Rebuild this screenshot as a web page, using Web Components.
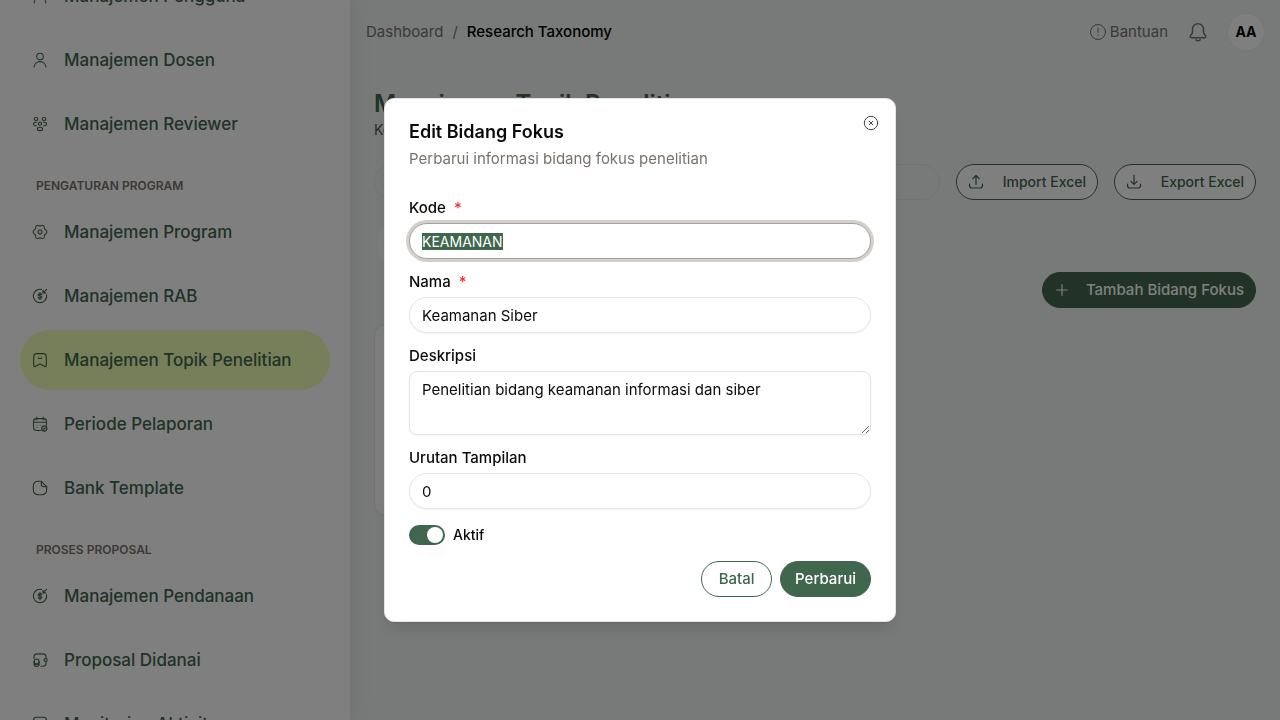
<!DOCTYPE html>
<html lang="id">
<head>
<meta charset="utf-8">
<meta name="viewport" content="width=device-width, initial-scale=1">
<title>Research Taxonomy</title>
<style>
  html, body { margin: 0; height: 100%; }
  body {
    --green: #40664d;
    --muted: #79716b;
    --line: #e5e5e5;
    --ink: #0c0a09;
    font: 400 15px/20px Inter, "Noto Sans", sans-serif;
    color: var(--ink);
    background: #f0f4f2;
  }
</style>
</head>
<body>
<app-shell>
  <side-nav slot="side">
    <nav-group>
      <nav-item icon="user">Manajemen Pengguna</nav-item>
      <nav-item icon="user">Manajemen Dosen</nav-item>
      <nav-item icon="team">Manajemen Reviewer</nav-item>
    </nav-group>
    <nav-group label="PENGATURAN PROGRAM">
      <nav-item icon="gear">Manajemen Program</nav-item>
      <nav-item icon="fund">Manajemen RAB</nav-item>
      <nav-item icon="bookmark" active>Manajemen Topik Penelitian</nav-item>
      <nav-item icon="calendar">Periode Pelaporan</nav-item>
      <nav-item icon="file">Bank Template</nav-item>
    </nav-group>
    <nav-group label="PROSES PROPOSAL">
      <nav-item icon="fund">Manajemen Pendanaan</nav-item>
      <nav-item icon="wallet">Proposal Didanai</nav-item>
      <nav-item icon="monitor">Monitoring Aktivitas</nav-item>
    </nav-group>
  </side-nav>
  <top-bar></top-bar>
  <topic-page></topic-page>
</app-shell>
<edit-dialog></edit-dialog>

<script>
const ICONS = {
  user: '<circle cx="8" cy="4.6" r="3.3"/><path d="M2.1 15c.2-3.2 2.8-5.4 5.9-5.4s5.7 2.2 5.9 5.4"/>',
  team: '<circle cx="4" cy="3" r="1.7"/><circle cx="12" cy="3" r="1.7"/><circle cx="8" cy="7.7" r="1.6"/><ellipse cx="8" cy="12.9" rx="2.6" ry="1.7"/><path d="M4.4 6.5H3a1.6 1.6 0 0 0 0 3.2h1.5M11.6 6.5H13a1.6 1.6 0 0 1 0 3.2h-1.5"/>',
  gear: '<path d="M8 2.300C9.300 1 11.200 1 12 2.200 12.600 3.200 12.100 4.400 12.700 5.200 13.300 5.900 14.900 6.200 14.900 8S13.300 10.100 12.700 10.800C12.100 11.600 12.600 12.800 12 13.800 11.200 15 9.300 15 8 13.700 6.700 15 4.800 15 4 13.800 3.400 12.800 3.900 11.600 3.300 10.800 2.700 10.100 1.100 9.800 1.100 8S2.700 5.900 3.300 5.200C3.900 4.400 3.400 3.200 4 2.200 4.800 1 6.700 1 8 2.300Z"/><path d="M6.900 6.100h2.200L10.200 8 9.100 9.900H6.900L5.800 8Z"/>',
  fund: '<path d="M9.500 1.400A6.700 6.700 0 1 0 14.600 6.700M14.600 1.300 11.200 4.700M11 2.200v2.700h2.700"/><path d="M9.800 6.600C9.400 5.900 8.800 5.700 8 5.700c-1 0-1.800.4-1.800 1.200C6.200 8.500 9.900 7.500 9.900 9.200c0 .8-.8 1.200-1.900 1.200-.9 0-1.600-.3-1.900-.9M8 4.700v6.700" stroke-width="1.2"/>',
  bookmark: '<path d="M1.700 5c0-2.400.9-3.400 3.300-3.400h6c2.400 0 3.300 1 3.300 3.400v8.200c0 1.600-.8 1.900-1.800 1.100L8 11.900l-4.500 2.400c-1 .8-1.800.5-1.800-1.100Z"/><path d="M6.300 6.100c1.100.6 2.300.6 3.400 0"/>',
  calendar: '<path d="M9 14.500H5c-2.400 0-3.500-1.100-3.500-3.500V5.500C1.500 3.600 2.400 2.600 4.500 2.600h7c2.100 0 3 1 3 2.900V9M1.800 6.200h12.400M4.800 1v2.800M11.200 1v2.800M5 9.200v.1M8 9.200v.1M5 11.500v.1"/><circle cx="12.300" cy="12.500" r="2.600"/><path d="m11.200 12.600.8.700 1.400-1.500"/>',
  file: '<path d="M9.300 1.300H6.500C3 1.300 1.300 3 1.300 6.500v3c0 3.500 1.700 5.200 5.200 5.200h3c3.500 0 5.200-1.700 5.200-5.200V6.700ZM9.300 1.300v2.900c0 1.700.8 2.500 2.500 2.500h2.900"/>',
  wallet: '<path d="M2 6.500V5.200C2 3.100 3.100 1.900 5.200 1.900h5.600C12.900 1.900 14 3.100 14 5.200v1M14 10.200v.7c0 2.100-1.100 3.300-3.200 3.300H9M14.900 6.700v2.600h-1.600a1.300 1.300 0 0 1 0-2.600Z"/><circle cx="4.600" cy="9.500" r="2.500"/><path d="M2.100 9.500v3c0 2.500 5 2.500 5 0v-3M2.300 11.400c.8 1.300 3.800 1.300 4.600 0"/>',
  monitor: '<rect x="1.500" y="1.300" width="13" height="10.500" rx="3"/><path d="M8 12v2.500M5 14.500h6"/>',
  help: '<circle cx="8" cy="8" r="7.500"/><path d="M8 4.500v4M8 11v.2"/>',
  bell: '<path d="M8 1.300a4.400 4.400 0 0 0-4.400 4.400v2.300c0 1.400-.8 2-1.600 2.900-.6.800-.3 1.600.7 1.600h10.600c1 0 1.300-.8.700-1.600-.8-.9-1.600-1.500-1.600-2.900V5.700A4.400 4.400 0 0 0 8 1.300ZM6.300 14.300c.9.900 2.500.9 3.400 0"/>',
  upload: '<path d="M8 10.500V1.700M4.900 4.600 8 1.500l3.100 3.100M1.500 10v1.500c0 1.700.8 2.500 2.500 2.500h8c1.700 0 2.500-.8 2.500-2.500V10"/>',
  download: '<path d="M8 1.300v8.900M4.900 7.300 8 10.400l3.100-3.100M1.500 10v1.500c0 1.700.8 2.500 2.500 2.500h8c1.700 0 2.500-.8 2.500-2.500V10"/>',
  plus: '<path d="M8 2.700v10.600M2.700 8h10.600"/>',
  close: '<circle cx="8" cy="8" r="6.700"/><path d="m6.200 6.200 3.600 3.600M9.800 6.200 6.200 9.800"/>'
};

function define(name, html, setup) {
  customElements.define(name, class extends HTMLElement {
    connectedCallback() {
      if (this.shadowRoot) return;
      const root = this.attachShadow({ mode: 'open' });
      root.innerHTML = typeof html === 'function' ? html(this) : html;
      if (setup) setup(root, this);
    }
  });
}

define('app-icon', el => `
  <style>
    :host { display: block; flex: none; width: 16px; height: 16px; }
    svg { display: block; width: 100%; height: 100%; overflow: visible; fill: none; stroke: currentColor;
          stroke-linecap: round; stroke-linejoin: round; }
  </style>
  <svg viewBox="0 0 16 16" aria-hidden="true" stroke-width="${el.getAttribute('weight') || 1}">${ICONS[el.getAttribute('name')]}</svg>`);

define('app-shell', `
  <style>
    :host { display: grid; grid-template-columns: 350px minmax(0, 1fr); min-height: 100vh; }
  </style>
  <slot name="side"></slot>
  <main><slot></slot></main>`);

define('side-nav', `
  <style>
    :host { display: block; position: sticky; top: 0; height: 100vh; background: #fff;
            box-shadow: 4px 0 20px rgba(0, 0, 0, .06); }
    nav { box-sizing: border-box; height: 100%; padding: 20px; overflow-y: auto; scrollbar-width: none;
          display: flex; flex-direction: column; gap: 24px; }
  </style>
  <nav><slot></slot></nav>`,
  root => requestAnimationFrame(() => { root.querySelector('nav').scrollTop = 54; }));

define('nav-group', el => `
  <style>
    :host { display: block; flex: none; }
    h2 { margin: 0 0 8px; padding: 0 16px; font-size: 12px; line-height: 16px; font-weight: 600; color: var(--muted); }
    div { display: flex; flex-direction: column; gap: 4px; }
  </style>
  ${el.getAttribute('label') ? `<h2>${el.getAttribute('label')}</h2>` : ''}
  <div><slot></slot></div>`);

define('nav-item', el => `
  <style>
    :host { display: block; }
    a { display: flex; align-items: center; gap: 16px; height: 60px; padding: 0 12px; border-radius: 30px;
        font-size: 17px; line-height: 24px; font-weight: 500; color: var(--green); text-decoration: none; white-space: nowrap; }
    :host([active]) a { background: #ecfcb4; }
  </style>
  <a href="#"${el.hasAttribute('active') ? ' aria-current="page"' : ''}><app-icon name="${el.getAttribute('icon')}" weight="1.1"></app-icon><span><slot></slot></span></a>`);

define('top-bar', `
  <style>
    :host { display: flex; align-items: center; justify-content: space-between; height: 64px; padding: 0 16px; color: var(--muted); }
    nav, .tools { display: flex; align-items: center; }
    nav { gap: 9px; }
    a { color: inherit; text-decoration: none; }
    b { font-weight: 500; color: #000; }
    .help { display: flex; align-items: center; gap: 4px; }
    .tools { gap: 20px; }
    button { font: inherit; color: inherit; border: 0; padding: 0; background: none; display: grid; place-items: center; }
    .bell app-icon { width: 20px; height: 20px; }
    .avatar { width: 36px; height: 36px; border-radius: 18px; background: #fff; color: #000; font-size: 14px; font-weight: 700;
              box-shadow: 0 0 0 1px #ebebeb; }
  </style>
  <nav aria-label="Breadcrumb"><a href="#">Dashboard</a><span>/</span><b>Research Taxonomy</b></nav>
  <div class="tools">
    <a class="help" href="#"><app-icon name="help"></app-icon>Bantuan</a>
    <button class="bell" type="button" aria-label="Notifikasi"><app-icon name="bell" weight="1.2"></app-icon></button>
    <button class="avatar" type="button">AA</button>
  </div>`);

define('pill-button', el => `
  <style>
    :host { display: block; flex: none; }
    button { box-sizing: border-box; display: flex; align-items: center; justify-content: space-between; gap: 16px; width: 100%;
             height: 36px; padding: 0 11px; border: 1px solid var(--green); border-radius: 18px; background: #fff;
             color: var(--green); font: inherit; font-weight: 500; white-space: nowrap; }
    :host([solid]) button { background: var(--green); color: #fff; }
    :host([plain]) button { min-width: 71px; padding: 0 14px; justify-content: center; }
  </style>
  <button type="button">${el.hasAttribute('icon') ? `<app-icon name="${el.getAttribute('icon')}" weight="1.2"></app-icon>` : ''}<slot></slot></button>`);

define('topic-page', `
  <style>
    :host { display: block; padding: 24px; }
    h1 { margin: 0; font-size: 24px; line-height: 32px; font-weight: 600; color: var(--green); }
    p { margin: 0; font-size: 14px; color: #475569; }
    .row { display: flex; gap: 16px; margin-top: 24px; }
    .row input { flex: 1; min-width: 0; box-sizing: border-box; height: 36px; border: 1px solid var(--line); border-radius: 18px;
                 background: none; padding: 0 12px; font: inherit; }
    .row pill-button { min-width: 142px; font-size: 14px; }
    .tabs { display: flex; margin-top: 24px; padding: 4px; }
    .tab { width: 160px; height: 32px; border-radius: 8px; background: #fafafa; }
    .actions { display: flex; justify-content: flex-end; margin-top: 8px; }
    .cards { display: grid; grid-template-columns: repeat(3, minmax(0, 1fr)); gap: 16px; margin-top: 16px; }
    .card { height: 190px; border: 1px solid var(--line); border-radius: 12px; background: #fcfcfc; box-shadow: 0 1px 2px rgba(0, 0, 0, .05); }
  </style>
  <h1>Manajemen Topik Penelitian</h1>
  <p>Kelola</p>
  <div class="row">
    <input type="search" aria-label="Cari">
    <pill-button icon="upload">Import Excel</pill-button>
    <pill-button icon="download">Export Excel</pill-button>
  </div>
  <div class="tabs"><div class="tab"></div></div>
  <div class="actions"><pill-button solid icon="plus">Tambah Bidang Fokus</pill-button></div>
  <div class="cards"><div class="card"></div></div>`);

define('form-field', el => {
  const value = el.getAttribute('value');
  const control = el.hasAttribute('multiline')
    ? `<textarea id="control">${value}</textarea>`
    : `<input id="control" type="${el.getAttribute('type') || 'text'}" value="${value}">`;
  return `
  <style>
    :host { display: grid; gap: 8px; }
    label { display: flex; gap: 8px; line-height: 14px; font-weight: 500; }
    i { color: #fb2c36; font-style: normal; }
    input, textarea { display: block; box-sizing: border-box; width: 100%; margin: 0; padding: 0 12px; border: 1px solid var(--line);
      background: #fff; color: inherit; font: inherit; box-shadow: 0 1px 2px rgba(0, 0, 0, .05); outline: 0; }
    input { height: 36px; border-radius: 18px; }
    textarea { height: 64px; padding: 8px 12px; border-radius: 8px; resize: vertical; }
    input:focus, textarea:focus { border-color: #a6a09b; box-shadow: 0 0 0 3px rgba(166, 160, 155, .5); }
    ::selection { background: var(--green); color: #fff; }
    :host([code]) input { font-size: 14px; }
  </style>
  <label for="control">${el.getAttribute('label')}${el.hasAttribute('required') ? '<i>*</i>' : ''}</label>
  ${control}`;
}, (root, el) => {
  if (el.hasAttribute('focused')) {
    const input = root.querySelector('input');
    input.focus();
    input.select();
  }
});

define('toggle-switch', `
  <style>
    :host { display: flex; align-items: center; gap: 8px; }
    input { appearance: none; width: 36px; height: 20px; margin: 0; padding: 2px; box-sizing: border-box; border-radius: 10px; background: #ddd; }
    input::before { content: ""; display: block; width: 16px; height: 16px; border-radius: 8px; background: #fff;
                    box-shadow: 0 10px 15px -3px rgba(0, 0, 0, .1); }
    input:checked { background: var(--green); }
    input:checked::before { margin-left: auto; }
    label { font-size: 14px; font-weight: 500; line-height: 20px; }
  </style>
  <input id="switch" type="checkbox" role="switch" checked><label for="switch"><slot></slot></label>`);

define('edit-dialog', `
  <style>
    :host { position: fixed; inset: 0; display: grid; place-items: center; background: rgba(0, 0, 0, .5); }
    section { position: relative; box-sizing: border-box; width: min(512px, calc(100% - 32px)); padding: 24px;
              border: 1px solid var(--line); border-radius: 10px; background: #fff; box-shadow: 0 10px 15px -3px rgba(0, 0, 0, .1), 0 4px 6px -4px rgba(0, 0, 0, .1); }
    h2 { margin: 0 0 8px; font-size: 18px; line-height: 18px; font-weight: 600; }
    p { margin: 0 0 32px; color: var(--muted); }
    .form { display: grid; gap: 16px; }
    footer { display: flex; justify-content: flex-end; gap: 8px; }
    .close { position: absolute; top: 16px; right: 16px; padding: 0; border: 0; background: none; color: #444; }
  </style>
  <section role="dialog" aria-modal="true" aria-labelledby="title">
    <h2 id="title">Edit Bidang Fokus</h2>
    <p>Perbarui informasi bidang fokus penelitian</p>
    <div class="form">
      <form-field label="Kode" value="KEAMANAN" required focused code></form-field>
      <form-field label="Nama" value="Keamanan Siber" required></form-field>
      <form-field label="Deskripsi" value="Penelitian bidang keamanan informasi dan siber" multiline></form-field>
      <form-field label="Urutan Tampilan" value="0" type="number"></form-field>
      <toggle-switch>Aktif</toggle-switch>
      <footer>
        <pill-button plain>Batal</pill-button>
        <pill-button plain solid>Perbarui</pill-button>
      </footer>
    </div>
    <button class="close" type="button" aria-label="Tutup"><app-icon name="close"></app-icon></button>
  </section>`);
</script>
</body>
</html>
